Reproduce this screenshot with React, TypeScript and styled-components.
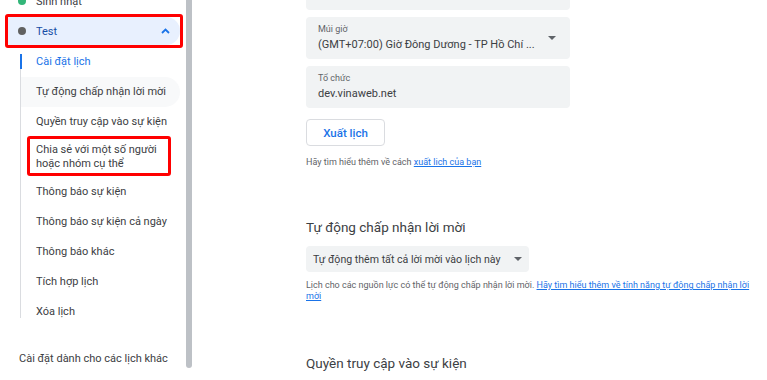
import React from "react";
import styled, { createGlobalStyle } from "styled-components";

const Global = createGlobalStyle`
  html, body { margin: 0; padding: 0; background: #ffffff; }
  body { font-family: Roboto, "Noto Sans", Arial, sans-serif; color: #3c4043; }
  * { box-sizing: border-box; }
`;

const Page = styled.div`
  display: flex;
  width: 767px;
  height: 380px;
  overflow: hidden;
  background: #fff;
`;

const Sidebar = styled.nav`
  width: 186px;
  flex: none;
  padding-right: 6px;
  overflow: hidden;
`;

const Scrolled = styled.div<{ $offset: number }>`
  margin-top: ${(p) => -p.$offset}px;
`;

const CalRow = styled.div<{ $active?: boolean }>`
  position: relative;
  display: flex;
  align-items: center;
  height: 28px;
  margin-bottom: 2px;
  margin-left: 8px;
  padding-left: 10px;
  padding-right: 10px;
  border-radius: 0 14px 14px 0;
  background: ${(p) => (p.$active ? "#e8f0fe" : "transparent")};
  color: ${(p) => (p.$active ? "#174ea6" : "#3c4043")};
  font-size: 11px;
`;

const Dot = styled.span<{ $color: string }>`
  width: 8px;
  height: 8px;
  border-radius: 50%;
  background: ${(p) => p.$color};
  flex: none;
  margin-right: 10px;
`;

const RowLabel = styled.span`
  flex: 1;
`;

const RedMark = styled.span<{ $t: number; $r: number; $b: number; $l: number }>`
  position: absolute;
  top: ${(p) => p.$t}px;
  right: ${(p) => p.$r}px;
  bottom: ${(p) => p.$b}px;
  left: ${(p) => p.$l}px;
  border: 3px solid #ff0000;
  border-radius: 3px;
  pointer-events: none;
`;

const SubList = styled.ul`
  position: relative;
  list-style: none;
  margin: 0 0 0 20px;
  padding: 0;
  &::before {
    content: "";
    position: absolute;
    left: 0;
    top: 7px;
    bottom: 9px;
    width: 1px;
    background: #dadce0;
  }
`;

const SubItem = styled.li<{ $active?: boolean; $hover?: boolean }>`
  position: relative;
  display: flex;
  align-items: center;
  min-height: 30px;
  padding: 6px 8px 6px 15px;
  margin-left: 1px;
  font-size: 11px;
  line-height: 14px;
  border-radius: 0 15px 15px 0;
  color: ${(p) => (p.$active ? "#1a73e8" : "#3c4043")};
  background: ${(p) => (p.$hover ? "#f8f9fa" : "transparent")};
  &::before {
    content: "";
    display: ${(p) => (p.$active ? "block" : "none")};
    position: absolute;
    left: -1px;
    top: 7px;
    width: 2px;
    height: 15px;
    background: #1a73e8;
  }
`;

const OtherHeader = styled.div`
  margin-top: 24px;
  padding-left: 19px;
  font-size: 11px;
  line-height: 16px;
  color: #3c4043;
`;

const Scrollbar = styled.div`
  width: 6px;
  height: 368px;
  flex: none;
  background: #bdc1c6;
  border-radius: 0 0 3px 3px;
`;

const Main = styled.main`
  flex: 1;
  padding-left: 114px;
  padding-right: 10px;
  overflow: hidden;
`;

const Field = styled.div`
  position: relative;
  width: 264px;
  height: 42px;
  background: #f1f3f4;
  border-radius: 4px;
  padding: 7px 12px 0 12px;
  margin-bottom: 7px;
`;

const FieldLabel = styled.div`
  font-size: 9px;
  line-height: 11px;
  color: #5f6368;
`;

const FieldValue = styled.div`
  margin-top: 3px;
  font-size: 11px;
  line-height: 14px;
  color: #3c4043;
  white-space: nowrap;
`;

const Caret = styled.span`
  position: absolute;
  right: 14px;
  top: 19px;
  width: 0;
  height: 0;
  border-left: 4px solid transparent;
  border-right: 4px solid transparent;
  border-top: 4px solid #5f6368;
`;

const OutlineButton = styled.button`
  display: block;
  margin-top: 11px;
  width: 79px;
  height: 27px;
  border: 1px solid #dadce0;
  border-radius: 4px;
  background: #fff;
  color: #1a73e8;
  font-family: Roboto, Arial, sans-serif;
  font-size: 11.5px;
  font-weight: 500;
  padding: 0;
`;

const Help = styled.p<{ $mt: number }>`
  margin: ${(p) => p.$mt}px 0 0 0;
  max-width: 446px;
  font-size: 9px;
  line-height: 11px;
  color: #5f6368;
`;

const HelpLink = styled.a`
  color: #1a73e8;
  text-decoration: underline;
`;

const SectionTitle = styled.h2<{ $mt: number }>`
  margin: ${(p) => p.$mt}px 0 0 0;
  font-size: 13.5px;
  line-height: 20px;
  font-weight: 400;
  color: #3c4043;
`;

const Select = styled.div`
  position: relative;
  display: flex;
  align-items: center;
  margin-top: 9px;
  width: 223px;
  height: 26px;
  padding-left: 7px;
  background: #f1f3f4;
  border-radius: 4px;
  font-size: 10.6px;
  color: #3c4043;
`;

const SelectCaret = styled(Caret)`
  right: 7px;
  top: 11px;
`;

const Chevron = () => (
  <svg width="9" height="6" viewBox="0 0 9 6" aria-hidden>
    <path d="M1 5 L4.5 1.5 L8 5" fill="none" stroke="#1a73e8" strokeWidth="1.8" />
  </svg>
);

const subItems = [
  "Cài đặt lịch",
  "Tự động chấp nhận lời mời",
  "Quyền truy cập vào sự kiện",
  "Chia sẻ với một số người hoặc nhóm cụ thể",
  "Thông báo sự kiện",
  "Thông báo sự kiện cả ngày",
  "Thông báo khác",
  "Tích hợp lịch",
  "Xóa lịch",
];

export default function App() {
  return (
    <>
      <Global />
      <Page>
        <Sidebar>
          <Scrolled $offset={13}>
            <CalRow>
              <Dot $color="#33b679" />
              <RowLabel>Sinh nhật</RowLabel>
            </CalRow>
            <CalRow $active>
              <Dot $color="#616161" />
              <RowLabel>Test</RowLabel>
              <Chevron />
              <RedMark $t={-3} $r={-3} $b={-3} $l={-3} />
            </CalRow>
            <SubList>
              {subItems.map((t, i) => (
                <SubItem key={t} $active={i === 0} $hover={i === 1}>
                  {t}
                  {i === 3 && <RedMark $t={-1} $r={9} $b={1} $l={6} />}
                </SubItem>
              ))}
            </SubList>
            <OtherHeader>Cài đặt dành cho các lịch khác</OtherHeader>
          </Scrolled>
        </Sidebar>
        <Scrollbar />
        <Main>
          <Scrolled $offset={32}>
            <Field>
              <FieldLabel>Mô tả</FieldLabel>
              <FieldValue />
            </Field>
            <Field>
              <FieldLabel>Múi giờ</FieldLabel>
              <FieldValue>(GMT+07:00) Giờ Đông Dương - TP Hồ Chí ...</FieldValue>
              <Caret />
            </Field>
            <Field>
              <FieldLabel>Tổ chức</FieldLabel>
              <FieldValue>dev.vinaweb.net</FieldValue>
            </Field>
            <OutlineButton>Xuất lịch</OutlineButton>
            <Help $mt={11}>
              Hãy tìm hiểu thêm về cách <HelpLink href="#">xuất lịch của bạn</HelpLink>
            </Help>
            <SectionTitle $mt={49}>Tự động chấp nhận lời mời</SectionTitle>
            <Select>
              Tự động thêm tất cả lời mời vào lịch này
              <SelectCaret />
            </Select>
            <Help $mt={8}>
              Lịch cho các nguồn lực có thể tự động chấp nhận lời mời.{" "}
              <HelpLink href="#">
                Hãy tìm hiểu thêm về tính năng tự động chấp nhận lời mời
              </HelpLink>
            </Help>
            <SectionTitle $mt={51}>Quyền truy cập vào sự kiện</SectionTitle>
          </Scrolled>
        </Main>
      </Page>
    </>
  );
}
